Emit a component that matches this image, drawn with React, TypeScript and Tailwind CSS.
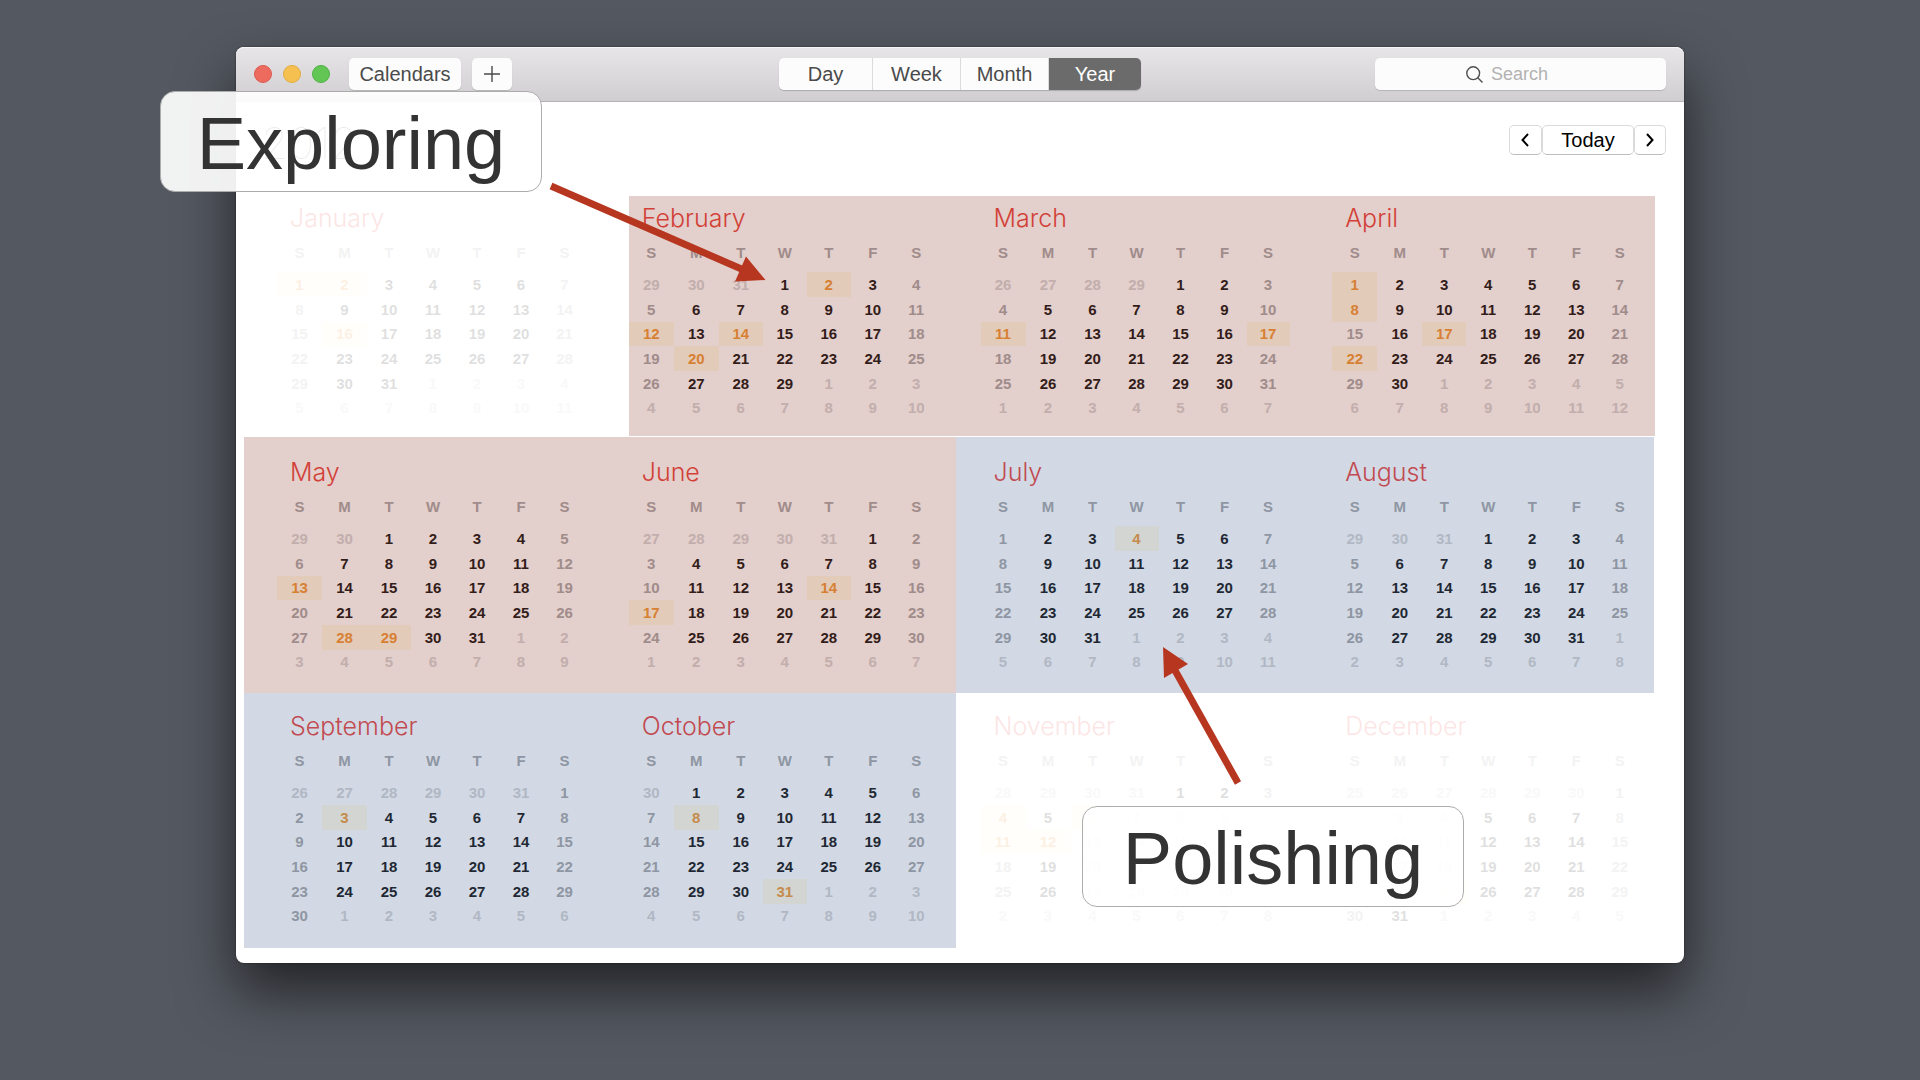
import { ReactNode } from "react";

type Month = { name: string; start: number; days: number; prev: number; marked: number[]; faded?: boolean };

const MONTHS: Month[] = [
  { name: "January", start: 0, days: 31, prev: 31, marked: [1, 2, 16], faded: true },
  { name: "February", start: 3, days: 29, prev: 31, marked: [2, 12, 14, 20] },
  { name: "March", start: 4, days: 31, prev: 29, marked: [11, 17] },
  { name: "April", start: 0, days: 30, prev: 31, marked: [1, 8, 17, 22] },
  { name: "May", start: 2, days: 31, prev: 30, marked: [13, 28, 29] },
  { name: "June", start: 5, days: 30, prev: 31, marked: [14, 17] },
  { name: "July", start: 0, days: 31, prev: 30, marked: [4] },
  { name: "August", start: 3, days: 31, prev: 31, marked: [] },
  { name: "September", start: 6, days: 30, prev: 31, marked: [3] },
  { name: "October", start: 1, days: 31, prev: 30, marked: [8, 31] },
  { name: "November", start: 4, days: 30, prev: 31, marked: [4, 6, 11, 12], faded: true },
  { name: "December", start: 6, days: 31, prev: 30, marked: [25], faded: true },
];

const WEEKDAYS = ["S", "M", "T", "W", "T", "F", "S"];

function MonthView({ month }: { month: Month }) {
  const weeks = Array.from({ length: 6 }, (_, w) =>
    Array.from({ length: 7 }, (_, d) => {
      const n = w * 7 + d - month.start + 1;
      const inside = n >= 1 && n <= month.days;
      const label = n < 1 ? month.prev + n : n > month.days ? n - month.days : n;
      const marked = inside && month.marked.includes(n);
      let tone = "text-black";
      if (!inside) tone = "text-[#d0d0d2]";
      else if (marked) tone = "bg-[#fffae4] text-[#ee8e26]";
      else if (d === 0 || d === 6) tone = "text-[#a0a0a2]";
      return { label, tone };
    }),
  );
  return (
    <section className={month.faded ? "pt-[19px] pb-[17px] pl-[33px] opacity-12" : "pt-[19px] pb-[17px] pl-[33px]"}>
      <h2 className="ml-[13px] h-[31px] text-[25px] leading-8 font-light text-[#e8332c] [font-family:Inter,sans-serif]">{month.name}</h2>
      <table aria-label={month.name} className="w-[309px] table-fixed border-collapse text-center text-[15px] leading-5 font-bold">
        <colgroup>
          <col className="w-[45px]" />
          <col className="w-[45px]" />
          <col className="w-[44px]" />
          <col className="w-[44px]" />
          <col className="w-[44px]" />
          <col className="w-[44px]" />
          <col className="w-[43px]" />
        </colgroup>
        <thead>
          <tr className="h-[39px] text-[#a0a0a2]">
            {WEEKDAYS.map((d, i) => (
              <th key={i} scope="col" className="p-0">{d}</th>
            ))}
          </tr>
        </thead>
        <tbody>
          {weeks.map((week, i) => (
            <tr key={i} className={i % 3 === 2 ? "h-6" : "h-[25px]"}>
              {week.map((day, j) => (
                <td key={j} className={"p-0 " + day.tone}>{day.label}</td>
              ))}
            </tr>
          ))}
        </tbody>
      </table>
    </section>
  );
}

function ToolButton({ children, label, className }: { children: ReactNode; label?: string; className: string }) {
  return (
    <button aria-label={label} className={"flex h-8 items-center justify-center bg-[#fcfcfc] text-xl text-[#4a4a4a] " + className}>
      {children}
    </button>
  );
}

function Callout({ children, className }: { children: ReactNode; className: string }) {
  return (
    <div className={"absolute flex h-[101px] w-[382px] items-center justify-center rounded-[15px] border border-[#acacac] bg-white/92 pt-1 text-[74px] leading-none text-[#333] " + className}>
      {children}
    </div>
  );
}

export default function App() {
  return (
    <div className="min-h-screen overflow-hidden bg-[#545860] font-normal [font-family:'Liberation_Sans',Arial,sans-serif]">
      <main className="relative mx-[236px] mt-[47px] rounded-lg bg-white shadow-[0_28px_56px_rgba(0,0,0,0.6),0_0_2px_rgba(0,0,0,0.5)]">
        <header className="grid h-[55px] grid-cols-[1fr_auto_1fr] items-center rounded-t-lg border-t border-b border-t-[#f6f5f6] border-b-[#b5b3b6] bg-linear-to-b from-[#e7e5e8] to-[#d0ced1] px-[18px] pb-px">
          <div className="flex items-center">
            <div className="mr-[19px] flex gap-[11px]">
              <button aria-label="Close" className="size-[18px] rounded-full border border-[#dd5a50] bg-[#ed6a5f]" />
              <button aria-label="Minimize" className="size-[18px] rounded-full border border-[#e0ad40] bg-[#f5c04f]" />
              <button aria-label="Zoom" className="size-[18px] rounded-full border border-[#52b146] bg-[#61c654]" />
            </div>
            <ToolButton className="w-28 rounded-[5px] shadow-[0_1px_1px_rgba(0,0,0,0.15)]">Calendars</ToolButton>
            <ToolButton label="Add event" className="ml-[11px] w-10 rounded-[5px] shadow-[0_1px_1px_rgba(0,0,0,0.15)]">
              <svg viewBox="0 0 16 16" className="size-4" fill="none" stroke="#4a4a4a" strokeWidth="1.4">
                <path d="M8 0v16M0 8h16" />
              </svg>
            </ToolButton>
          </div>
          <nav aria-label="View" className="flex gap-px overflow-hidden rounded-[5px] bg-[#dcdadd] shadow-[0_1px_1px_rgba(0,0,0,0.2)]">
            <ToolButton className="w-[93px]">Day</ToolButton>
            <ToolButton className="w-[87px]">Week</ToolButton>
            <ToolButton className="w-[87px]">Month</ToolButton>
            <button aria-pressed="true" className="flex h-8 w-[92px] items-center justify-center bg-[#6b6b6b] text-xl text-white">Year</button>
          </nav>
          <label className="flex h-8 w-[291px] items-center justify-center gap-2 justify-self-end rounded-[5px] bg-[#fcfcfc] shadow-[0_1px_1px_rgba(0,0,0,0.15)]">
            <svg viewBox="0 0 17 17" className="size-[17px]" fill="none" stroke="#4f4f4f" strokeWidth="1.4">
              <circle cx="7.2" cy="7.2" r="6.4" />
              <path d="M11.8 11.8l4.7 4.7" />
            </svg>
            <input type="text" aria-label="Search" placeholder="Search" className="w-[84px] bg-transparent text-lg outline-none placeholder:text-[#b2b2b2]" />
          </label>
        </header>

        <div className="flex h-[81px] items-start justify-between pt-[23px] pr-[18px] pl-[25px]">
          <h1 className="pt-px text-[44px] leading-[34px] font-thin text-black [font-family:Inter,sans-serif]">2012</h1>
          <div className="flex text-black">
            <button aria-label="Previous year" className="flex h-[30px] w-[33px] items-center justify-center rounded-[5px] border border-[#dadada] border-b-[#bdbdbd] bg-white pr-0.5">
              <svg viewBox="0 0 8 14" className="h-3.5 w-2" fill="none" stroke="currentColor" strokeWidth="2"><path d="M7 1L1.5 7L7 13" /></svg>
            </button>
            <button className="flex h-[30px] w-[92px] items-center justify-center rounded-[5px] border border-[#dadada] border-b-[#bdbdbd] bg-white text-xl leading-none">Today</button>
            <button aria-label="Next year" className="flex h-[30px] w-8 items-center justify-center rounded-[5px] border border-[#dadada] border-b-[#bdbdbd] bg-white">
              <svg viewBox="0 0 8 14" className="h-3.5 w-2" fill="none" stroke="currentColor" strokeWidth="2"><path d="M1 1L6.5 7L1 13" /></svg>
            </button>
          </div>
        </div>

        <div className="pr-7 pb-[18px] pl-2">
          <div className="relative">
            <div className="mr-[5px] grid grid-cols-4">
              {MONTHS.map((m) => (
                <MonthView key={m.name} month={m} />
              ))}
            </div>
            <div className="pointer-events-none absolute top-[13px] right-px left-[calc(25%+32px)] h-[240px] bg-[rgb(161,97,87)]/30" />
            <div className="pointer-events-none absolute top-[254px] left-0 h-[256px] w-[calc(50%+6px)] bg-[rgb(161,97,87)]/30" />
            <div className="pointer-events-none absolute top-[254px] right-[2px] left-[calc(50%+6px)] h-[256px] bg-[rgb(107,130,167)]/30" />
            <div className="pointer-events-none absolute top-[510px] left-0 h-[255px] w-[calc(50%+6px)] bg-[rgb(107,130,167)]/30" />
          </div>
        </div>

        <Callout className="top-11 left-[-76px]">Exploring</Callout>
        <Callout className="top-[759px] left-[846px]">Polishing</Callout>

        {/* Arrows from the callouts to the shaded months */}
        <svg viewBox="0 0 1448 917" className="pointer-events-none absolute top-0 left-0 h-[917px] w-[1448px]" fill="#b7361f" stroke="none">
          <path d="M315 139L510 224" stroke="#b7361f" strokeWidth="7" />
          <path d="M529.500 233L510 209.500L499 234.500Z" />
          <path d="M1002 736L936 618" stroke="#b7361f" strokeWidth="7" />
          <path d="M927 600L952 617L928 631Z" />
        </svg>
      </main>
    </div>
  );
}
